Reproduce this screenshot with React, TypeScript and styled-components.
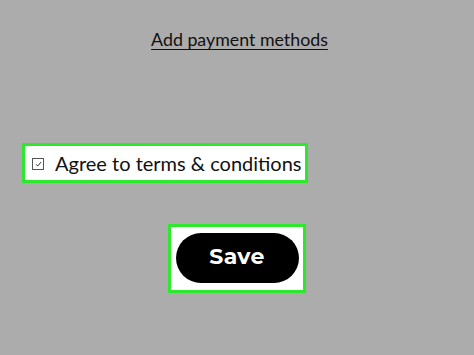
import React, { useState } from 'react'
import styled, { createGlobalStyle } from 'styled-components'

const GlobalStyle = createGlobalStyle`
  html, body {
    margin: 0;
    padding: 0;
    background: #acacac;
  }
`

const Page = styled.div`
  width: 474px;
  height: 355px;
  display: flex;
  flex-direction: column;
  font-family: 'Lato', 'Noto Sans', sans-serif;
  color: #111;
`

const LinkRow = styled.div`
  display: flex;
  justify-content: center;
  padding: 28px 0 0 5px;
  height: 64px;
  box-sizing: border-box;
`

const Link = styled.a`
  font-size: 17.8px;
  color: #111;
  text-decoration: underline;
  text-underline-offset: 3px;
  text-decoration-thickness: 1px;
  cursor: pointer;
`

const AgreeBox = styled.label`
  align-self: flex-start;
  margin: 79px 0 0 22px;
  display: flex;
  align-items: center;
  gap: 11px;
  width: 286px;
  height: 40px;
  box-sizing: border-box;
  padding-left: 7px;
  background: #fff;
  border: 3px solid #2ee82e;
  font-size: 20px;
  white-space: nowrap;
  cursor: pointer;
`

const Check = styled.span`
  flex-shrink: 0;
  width: 10px;
  height: 10px;
  border: 1px solid #555;
  display: flex;
  align-items: center;
  justify-content: center;
  margin-top: 1px;
`

const SaveFrame = styled.div`
  align-self: center;
  margin: 41px 0 0 -1px;
  width: 138px;
  height: 69px;
  box-sizing: border-box;
  padding: 6px 4px 7px 5px;
  background: #fff;
  border: 3px solid #2ee82e;
  display: flex;
`

const SaveButton = styled.button`
  flex: 1;
  border: none;
  border-radius: 26px;
  background: #000;
  color: #fff;
  padding: 0 0 4px;
  font-family: 'Montserrat', 'Inter', sans-serif;
  font-weight: 700;
  font-size: 22px;
  letter-spacing: 0.3px;
  cursor: pointer;
`

export default function App() {
  const [agreed, setAgreed] = useState(true)

  return (
    <>
      <GlobalStyle />
      <Page>
        <LinkRow>
          <Link>Add payment methods</Link>
        </LinkRow>
        <AgreeBox onClick={() => setAgreed(!agreed)}>
          <Check>
            {agreed && (
              <svg width="7" height="6" viewBox="0 0 7 6">
                <path d="M1 3.2 L2.8 5 L6 1" fill="none" stroke="#333" strokeWidth="1" />
              </svg>
            )}
          </Check>
          Agree to terms &amp; conditions
        </AgreeBox>
        <SaveFrame>
          <SaveButton>Save</SaveButton>
        </SaveFrame>
      </Page>
    </>
  )
}
